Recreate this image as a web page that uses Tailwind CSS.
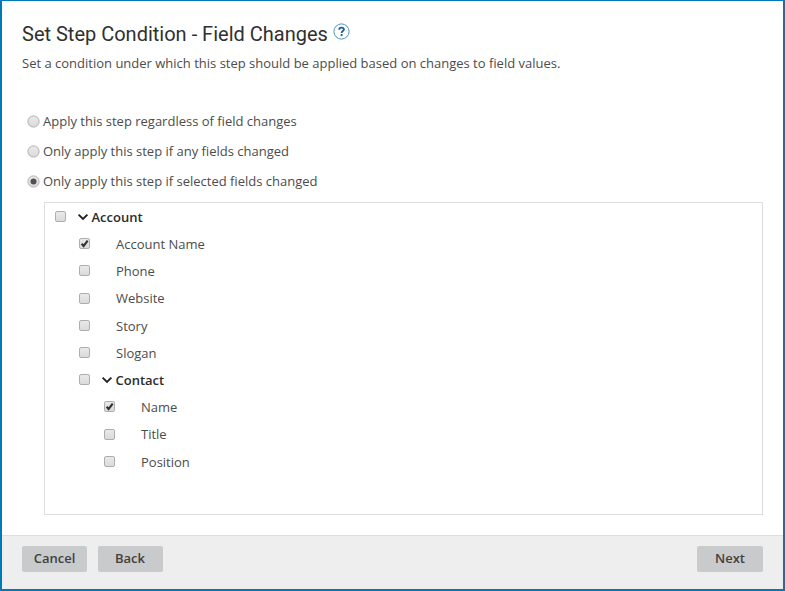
<!DOCTYPE html>
<html lang="en">
<head>
<meta charset="utf-8">
<title>Set Step Condition</title>
<script src="https://cdn.jsdelivr.net/npm/@tailwindcss/browser@4"></script>
</head>
<body class="overflow-hidden bg-white font-['Open_Sans','Noto_Sans',sans-serif] text-[13px] text-[#4c4c4c]">
<svg class="absolute size-0">
  <defs>
    <linearGradient id="g" x1="0" y1="0" x2="0" y2="1"><stop offset="0" stop-color="#eaeaea"/><stop offset="1" stop-color="#dadada"/></linearGradient>
    <symbol id="box" viewBox="0 0 13 13"><rect x="1.5" y="1.5" width="10" height="10" rx="1.6" fill="url(#g)" stroke="#adadad"/></symbol>
    <symbol id="checked" viewBox="0 0 13 13"><rect x="1.5" y="1.5" width="10" height="10" rx="1.6" fill="url(#g)" stroke="#adadad"/><path d="M3.6 6.8 5.6 9 9.7 3.6" fill="none" stroke="#333" stroke-width="2.1"/></symbol>
    <symbol id="radio" viewBox="0 0 13 13"><circle cx="6.5" cy="6.5" r="5.6" fill="url(#g)" stroke="#b0b0b0"/></symbol>
    <symbol id="chev" viewBox="0 0 12 8"><path d="M1.6 1.6 6 5.9 10.4 1.6" fill="none" stroke="#222" stroke-width="1.9"/></symbol>
  </defs>
</svg>
<div class="flex h-[591px] w-[785px] flex-col border-2 border-t-[1.5px] border-[#0079b8]">
  <main class="flex-1 pl-5 pr-5">
    <h1 class="mt-[20px] flex h-[26px] items-center font-[Roboto] text-[20px] text-[#303030]"><span class="whitespace-nowrap">Set Step Condition - Field Changes</span>
      <svg class="-mt-[5px] ml-[5px] size-[17px]" viewBox="0 0 17 17"><circle cx="8.5" cy="8.5" r="7.6" fill="#fff" stroke="#4c93c4"/><path d="M6.2 6.8C6.2 5.4 7.1 4.6 8.5 4.6S10.9 5.4 10.9 6.5C10.9 8 8.6 8.1 8.6 9.9M8.6 11.1V12.9" fill="none" stroke="#1d5f9c" stroke-width="1.8"/></svg>
    </h1>
    <p class="mt-[6px] h-5 leading-5">Set a condition under which this step should be applied based on changes to field values.</p>
    <div class="mt-[34px] ml-[5px] flex flex-col">
      <label class="flex h-[30px] items-center gap-[3px]"><svg class="mb-px size-[13px]"><use href="#radio"/></svg>Apply this step regardless of field changes</label>
      <label class="flex h-[30px] items-center gap-[3px]"><svg class="mb-px size-[13px]"><use href="#radio"/></svg>Only apply this step if any fields changed</label>
      <label class="flex h-[30px] items-center gap-[3px]"><svg class="mb-px size-[13px]" viewBox="0 0 13 13"><use href="#radio"/><circle cx="6.5" cy="6.5" r="3" fill="#505050"/></svg>Only apply this step if selected fields changed</label>
    </div>
    <div class="mt-[5px] ml-[22px] h-[313px] w-[719px] border border-[#dedede] pt-px text-[13px]">
      <div class="flex h-[27.2px] items-center pl-[9px] font-semibold text-[#2b2b2b]"><svg class="mb-[2px] size-[13px]"><use href="#box"/></svg><svg class="mb-px ml-[9.5px] mr-[3px] h-2 w-3"><use href="#chev"/></svg>Account</div>
      <div class="flex h-[27.2px] items-center gap-[25px] pl-[33px]"><svg class="mb-[2px] size-[13px]"><use href="#checked"/></svg>Account Name</div>
      <div class="flex h-[27.2px] items-center gap-[25px] pl-[33px]"><svg class="mb-[2px] size-[13px]"><use href="#box"/></svg>Phone</div>
      <div class="flex h-[27.2px] items-center gap-[25px] pl-[33px]"><svg class="mb-[2px] size-[13px]"><use href="#box"/></svg>Website</div>
      <div class="flex h-[27.2px] items-center gap-[25px] pl-[33px]"><svg class="mb-[2px] size-[13px]"><use href="#box"/></svg>Story</div>
      <div class="flex h-[27.2px] items-center gap-[25px] pl-[33px]"><svg class="mb-[2px] size-[13px]"><use href="#box"/></svg>Slogan</div>
      <div class="flex h-[27.2px] items-center pl-[33px] font-semibold text-[#2b2b2b]"><svg class="mb-[2px] size-[13px]"><use href="#box"/></svg><svg class="mb-px ml-[9.5px] mr-[3px] h-2 w-3"><use href="#chev"/></svg>Contact</div>
      <div class="flex h-[27.2px] items-center gap-[25px] pl-[58px]"><svg class="mb-[2px] size-[13px]"><use href="#checked"/></svg>Name</div>
      <div class="flex h-[27.2px] items-center gap-[25px] pl-[58px]"><svg class="mb-[2px] size-[13px]"><use href="#box"/></svg>Title</div>
      <div class="flex h-[27.2px] items-center gap-[25px] pl-[58px]"><svg class="mb-[2px] size-[13px]"><use href="#box"/></svg>Position</div>
    </div>
  </main>
  <footer class="flex h-[54px] shrink-0 items-start border-t border-[#dedede] bg-[#eeeeee] px-5 pt-[10px] font-semibold text-[#404040]">
    <button class="h-[26px] w-[65px] rounded-xs bg-[#c9cacb]">Cancel</button>
    <button class="ml-[10.5px] h-[26px] w-[65px] rounded-xs bg-[#c9cacb]">Back</button>
    <button class="ml-auto h-[26px] w-[66px] rounded-xs bg-[#c9cacb]">Next</button>
  </footer>
</div>
</body>
</html>
